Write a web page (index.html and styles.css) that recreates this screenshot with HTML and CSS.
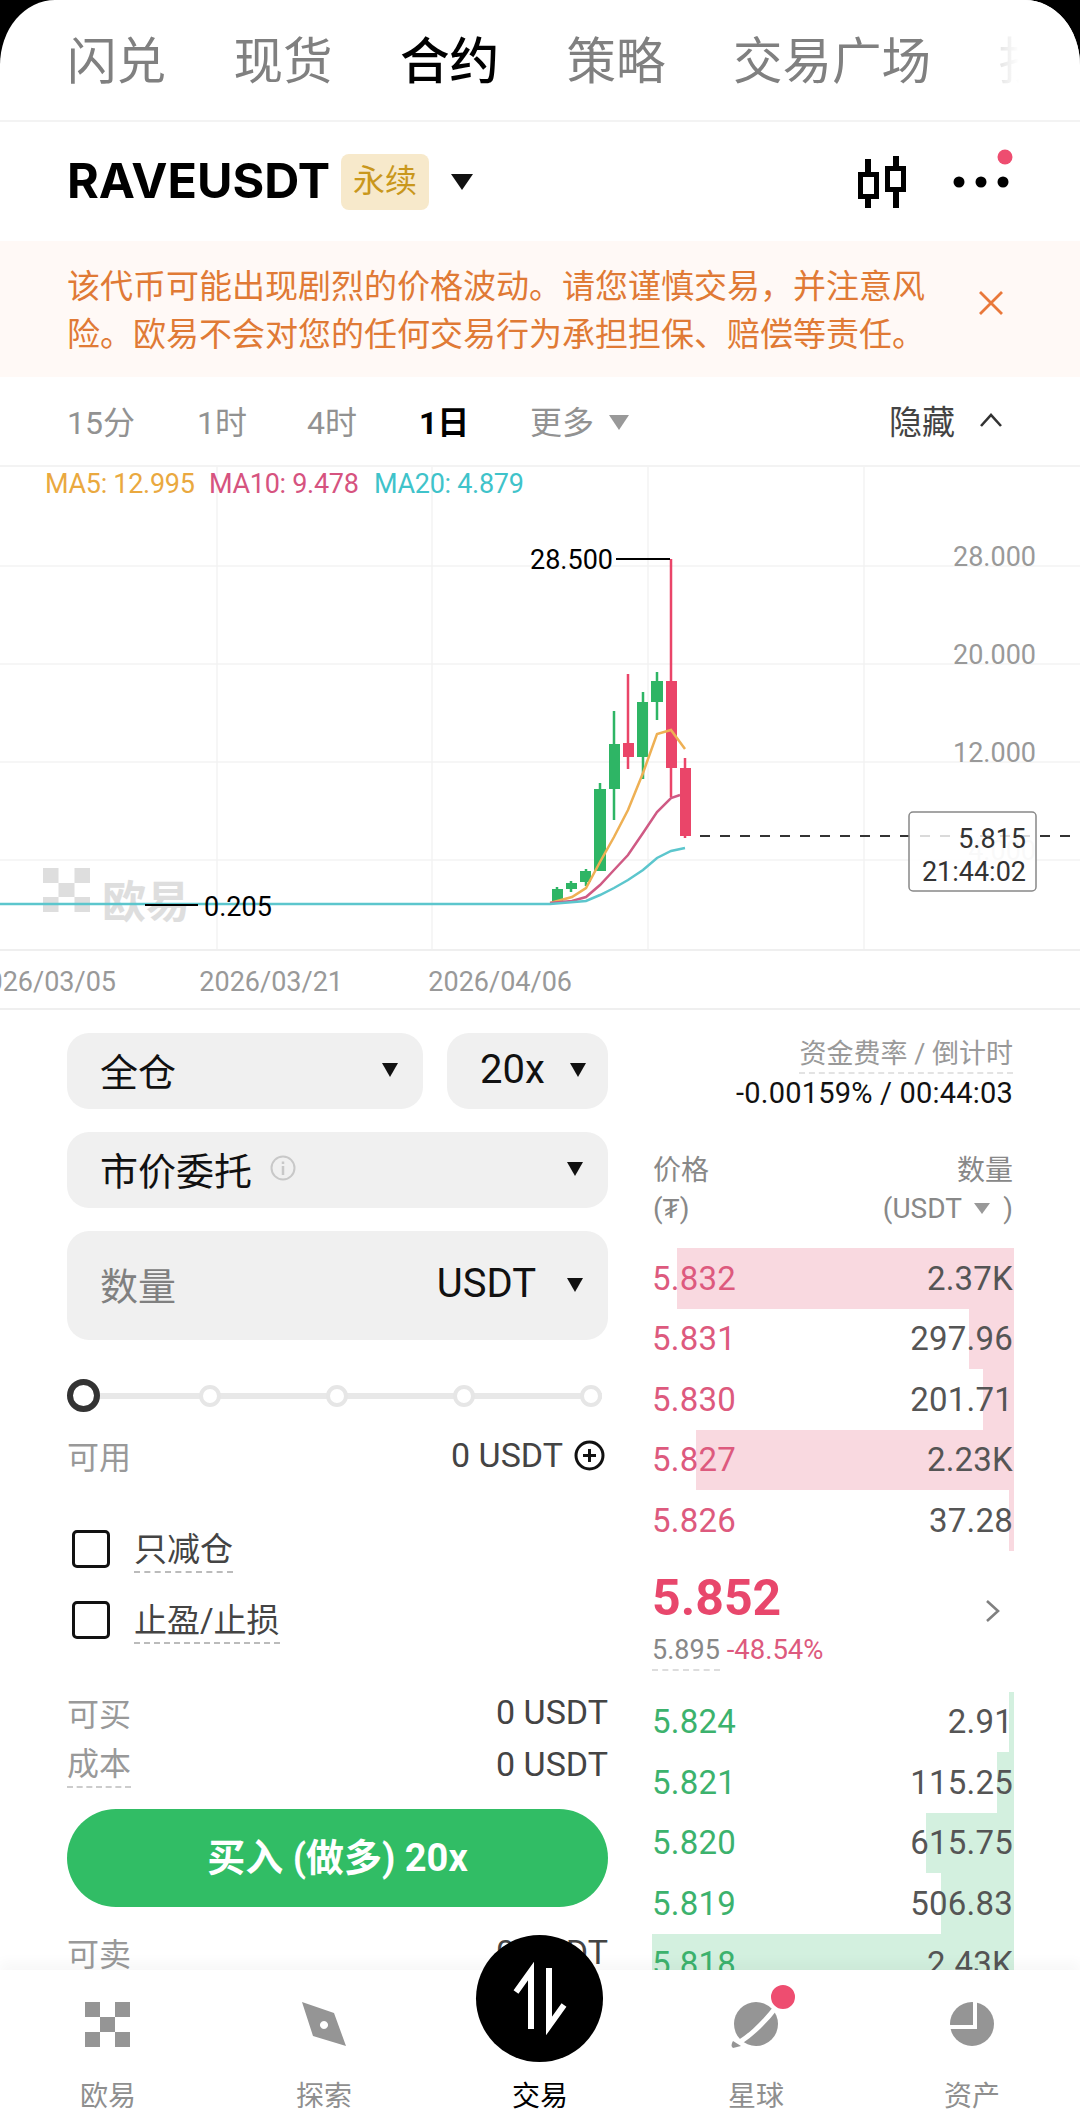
FILE: index.html
```html
<!DOCTYPE html>
<html lang="zh-CN">
  <head>
    <meta charset="UTF-8" />
    <meta name="viewport" content="width=device-width, initial-scale=1.0" />
    <title>RAVEUSDT 永续</title>
    <link rel="stylesheet" href="styles.css">
  </head>
  <body>
    <div class="app">
      <div class="tabs">
        <span class="tab">闪兑</span>
        <span class="tab">现货</span>
        <span class="tab tab-active">合约</span>
        <span class="tab">策略</span>
        <span class="tab">交易广场</span>
        <span class="tab">抄底</span>
      </div>

      <div class="symbol-bar">
        <span class="symbol">RAVEUSDT</span>
        <span class="badge">永续</span>
        <span class="tri tri-symbol"></span>
        <svg class="candle-icon" width="50" height="54" viewBox="857 152 50 54">
          <path d="M868 156V169M868 195V205M896 153V163M896 188V205" stroke="#000" stroke-width="6" fill="none" />
          <rect x="860.5" y="171.5" width="16" height="22" stroke="#000" stroke-width="5" fill="none" />
          <rect x="887.5" y="165.5" width="16" height="21" stroke="#000" stroke-width="5" fill="none" />
        </svg>
        <svg class="more-icon" width="64" height="44" viewBox="950 148 64 44">
          <circle cx="959" cy="182" r="5.5" fill="#000" />
          <circle cx="981" cy="182" r="5.5" fill="#000" />
          <circle cx="1003" cy="182" r="5.5" fill="#000" />
          <circle cx="1005" cy="157" r="7.5" fill="#ee4d70" />
        </svg>
      </div>

      <div class="notice">
        <p class="notice-text">该代币可能出现剧烈的价格波动。请您谨慎交易，并注意风险。欧易不会对您的任何交易行为承担担保、赔偿等责任。</p>
        <svg class="notice-close" width="26" height="26" viewBox="0 0 26 26">
          <path d="M2 2L24 24M24 2L2 24" stroke="#e9783a" stroke-width="2.8" fill="none" />
        </svg>
      </div>

      <div class="intervals">
        <span class="interval interval-15">15分</span>
        <span class="interval interval-1h">1时</span>
        <span class="interval interval-4h">4时</span>
        <span class="interval interval-active">1日</span>
        <span class="interval">更多</span>
        <span class="tri tri-more"></span>
        <span class="hide-chart">隐藏</span>
        <svg width="24" height="16" viewBox="0 0 24 16">
          <path d="M2 14L12 3L22 14" stroke="#333" stroke-width="2.6" fill="none" />
        </svg>
      </div>

      <svg class="chart" width="1080" height="543" viewBox="0 467 1080 543">
        <!-- grid -->
        <path class="grid" d="M217 467V950M432 467V950M648 467V950M864 467V950M0 566H1080M0 664H1080M0 762H1080M0 860H1080" />
        <path class="grid-strong" d="M0 950H1080M0 1009H1080" />

        <!-- watermark -->
        <g class="watermark">
          <rect x="43" y="868" width="15.5" height="15" />
          <rect x="74.500" y="868" width="15.500" height="15" />
          <rect x="58.500" y="883" width="16" height="14" />
          <rect x="43" y="897" width="15.500" height="15" />
          <rect x="74.500" y="897" width="15.500" height="15" />
          <text x="102" y="906">欧易</text>
        </g>

        <text class="ma ma5" x="45" y="493">MA5: 12.995</text>
        <text class="ma ma10" x="209" y="493">MA10: 9.478</text>
        <text class="ma ma20" x="374" y="493">MA20: 4.879</text>

        <text class="axis" x="1036" y="566">28.000</text>
        <text class="axis" x="1036" y="664">20.000</text>
        <text class="axis" x="1036" y="762">12.000</text>
        <text class="axis axis-faint" x="1036" y="860">4.000</text>

        <!-- green candles -->
        <g class="up">
          <path class="wick" d="M557 887V903M571 881V892M586 869V886M600 783V789M614 711V820M643 692V779M657 672V720" />
          <rect x="552" y="889" width="11" height="13" />
          <rect x="566" y="883" width="11" height="6" />
          <rect x="580" y="871" width="11" height="11" />
          <rect x="594" y="789" width="12" height="82" />
          <rect x="609" y="744" width="11" height="45" />
          <rect x="637" y="702" width="11" height="55" />
          <rect x="651" y="681" width="12" height="21" />
        </g>
        <!-- red candles -->
        <g class="down">
          <path class="wick" d="M628 674V769M671 559V797M685 758V838" />
          <rect x="623" y="743" width="11" height="14" />
          <rect x="666" y="681" width="11" height="87" />
          <rect x="680" y="768" width="11" height="68" />
        </g>

        <polyline class="line line-ma5" points="550,903 572,897 586,888 600,862 614,837 628,810 643,773 657,734 671,730 685,749" />
        <polyline class="line line-ma10" points="550,903 572,901 586,897 600,885 614,870 628,855 643,833 657,812 671,798 680,795" />
        <polyline class="line line-ma20" points="0,904 550,904 586,901 600,895 614,888 628,880 643,870 657,858 671,851 685,848" />

        <path class="mark-line" d="M616 559H670M145 905H198" />
        <text class="mark" x="530" y="569">28.500</text>
        <text class="mark" x="204" y="916">0.205</text>

        <path class="last-line" d="M700 836H1080" />
        <rect class="last-box" x="909" y="812" width="127" height="79" rx="4" />
        <text class="last-price" x="1026" y="848">5.815</text>
        <text class="last-price" x="1026" y="881">21:44:02</text>

        <text class="date" x="116" y="991">2026/03/05</text>
        <text class="date" x="343" y="991">2026/03/21</text>
        <text class="date" x="572" y="991">2026/04/06</text>
      </svg>

      <div class="trade">
        <div class="order-form">
          <div class="select-row">
            <div class="select select-margin">
              <span>全仓</span>
              <span class="tri"></span>
            </div>
            <div class="select select-lever">
              <span class="latin">20x</span>
              <span class="tri"></span>
            </div>
          </div>
          <div class="select">
            <span>市价委托</span>
            <svg class="info-icon" width="26" height="26" viewBox="0 0 26 26">
              <circle cx="13" cy="13" r="11.500" stroke="#c8c8c8" stroke-width="2" fill="none" />
              <path d="M13 11V20M13 6.500V9" stroke="#c8c8c8" stroke-width="2.500" fill="none" />
            </svg>
            <span class="tri tri-push"></span>
          </div>
          <div class="select select-amount">
            <span class="placeholder">数量</span>
            <span class="latin unit">USDT</span>
            <span class="tri"></span>
          </div>

          <div class="slider">
            <span class="slider-thumb"></span>
            <span class="slider-dot"></span>
            <span class="slider-dot"></span>
            <span class="slider-dot"></span>
            <span class="slider-dot"></span>
          </div>

          <div class="info-row info-available">
            <span class="info-label">可用</span>
            <span class="info-value">0 USDT</span>
            <svg class="plus-icon" width="31" height="31" viewBox="0 0 31 31">
              <circle cx="15.500" cy="15.500" r="13.500" stroke="#111" stroke-width="3" fill="none" />
              <path d="M15.500 9V22M9 15.500H22" stroke="#111" stroke-width="3" fill="none" />
            </svg>
          </div>

          <div class="check-row check-first">
            <span class="check"></span>
            <span class="check-label">只减仓</span>
          </div>
          <div class="check-row">
            <span class="check"></span>
            <span class="check-label">止盈/止损</span>
          </div>

          <div class="info-row info-buy">
            <span class="info-label">可买</span>
            <span class="info-value">0 USDT</span>
          </div>
          <div class="info-row info-cost">
            <span class="info-label info-dashed">成本</span>
            <span class="info-value">0 USDT</span>
          </div>

          <div class="buy-btn">买入 (做多) 20x</div>

          <div class="info-row info-sell">
            <span class="info-label">可卖</span>
            <span class="info-value">0 USDT</span>
          </div>
        </div>

        <div class="book">
          <div class="funding">
            <span class="funding-label">资金费率 / 倒计时</span>
            <span class="funding-value">-0.00159% / 00:44:03</span>
          </div>

          <div class="book-head">
            <div>
              <div>价格</div>
              <div>(₮)</div>
            </div>
            <div class="book-head-right">
              <div>数量</div>
              <div class="book-unit">(USDT <span class="tri tri-unit"></span> )</div>
            </div>
          </div>

          <div class="book-row ask">
            <span class="depth" style="width: 93.1%"></span>
            <span class="price">5.832</span><span class="qty">2.37K</span>
          </div>
          <div class="book-row ask">
            <span class="depth" style="width: 12.4%"></span>
            <span class="price">5.831</span><span class="qty">297.96</span>
          </div>
          <div class="book-row ask">
            <span class="depth" style="width: 8.6%"></span>
            <span class="price">5.830</span><span class="qty">201.71</span>
          </div>
          <div class="book-row ask">
            <span class="depth" style="width: 87.8%"></span>
            <span class="price">5.827</span><span class="qty">2.23K</span>
          </div>
          <div class="book-row ask">
            <span class="depth" style="width: 1.4%"></span>
            <span class="price">5.826</span><span class="qty">37.28</span>
          </div>

          <div class="mid">
            <div class="mid-top">
              <span class="mid-price">5.852</span>
              <svg class="mid-chevron" width="15" height="24" viewBox="0 0 15 24">
                <path d="M2 2L13 12L2 22" stroke="#808080" stroke-width="2.600" fill="none" />
              </svg>
            </div>
            <div class="mid-sub">
              <span class="mark-price">5.895</span>
              <span class="mid-change">-48.54%</span>
            </div>
          </div>

          <div class="book-row bid">
            <span class="depth" style="width: 1.4%"></span>
            <span class="price">5.824</span><span class="qty">2.91</span>
          </div>
          <div class="book-row bid">
            <span class="depth" style="width: 4.7%"></span>
            <span class="price">5.821</span><span class="qty">115.25</span>
          </div>
          <div class="book-row bid">
            <span class="depth" style="width: 24.3%"></span>
            <span class="price">5.820</span><span class="qty">615.75</span>
          </div>
          <div class="book-row bid">
            <span class="depth" style="width: 20.2%"></span>
            <span class="price">5.819</span><span class="qty">506.83</span>
          </div>
          <div class="book-row bid">
            <span class="depth" style="width: 100%"></span>
            <span class="price">5.818</span><span class="qty">2.43K</span>
          </div>
        </div>
      </div>

      <div class="nav">
        <div class="nav-item">
          <svg class="nav-icon" width="46" height="46" viewBox="0 0 46 46">
            <path class="nav-fill" d="M0 0H15V15H0ZM30 0H45V15H30ZM15 15H30V30H15ZM0 30H15V45H0ZM30 30H45V45H30Z" />
          </svg>
          <span>欧易</span>
        </div>
        <div class="nav-item">
          <svg class="nav-icon" width="46" height="46" viewBox="301 2002 46 46">
            <path class="nav-fill" fill-rule="evenodd" d="M302 2002L334 2013L346 2046L313 2036ZM324 2021a4 4 0 1 0 0.010 0Z" />
          </svg>
          <span>探索</span>
        </div>
        <div class="nav-item nav-active">
          <span>交易</span>
        </div>
        <div class="nav-item">
          <svg class="nav-icon" width="46" height="46" viewBox="733 2002 46 46">
            <circle class="nav-fill" cx="756" cy="2024" r="22" />
            <path d="M731 2046C745 2042 765 2022 777 2006" stroke="#fff" stroke-width="5" fill="none" />
            <path d="M733 2041Q730 2046 733 2048L741 2046Z" class="nav-fill" />
            <circle cx="783" cy="1997" r="13" fill="#ee4d70" stroke="#fff" stroke-width="2" />
          </svg>
          <span>星球</span>
        </div>
        <div class="nav-item">
          <svg class="nav-icon" width="46" height="46" viewBox="949 2002 46 46">
            <circle class="nav-fill" cx="972" cy="2024" r="22" />
            <path d="M975 2000V2027H948" stroke="#fff" stroke-width="4" fill="none" />
          </svg>
          <span>资产</span>
        </div>
        <div class="trade-btn">
          <svg width="127" height="127" viewBox="476 1935 127 127">
            <path d="M531 2029V1971L516 1992M549 1968V2026L564 2005" stroke="#fff" stroke-width="6" fill="none" />
          </svg>
        </div>
      </div>
    </div>
  </body>
</html>
```

FILE: styles.css
```css
* {
  box-sizing: border-box;
}

html,
body {
  margin: 0;
  background-color: #000; /* shows in the rounded corners */
}

body {
  font-family: Roboto, "Noto Sans CJK SC", sans-serif;
}

.app {
  position: relative;
  width: 1080px;
  height: 2128px;
  overflow: hidden;
  background-color: #fff;
  border-radius: 55px 55px 0 0 / 65px 65px 0 0;
}

/* Top tabs */
.tabs {
  position: relative;
  display: flex;
  gap: 67.5px;
  height: 122px;
  padding: 33px 0 0 67px;
  border-bottom: 2px solid #f3f3f3;
  white-space: nowrap;
  overflow: hidden;
}

.tabs::after {
  content: "";
  position: absolute;
  top: 0;
  right: 0;
  width: 80px;
  height: 110px;
  background: linear-gradient(to right, rgba(255, 255, 255, 0.8), #fff 24%);
}

.tab {
  font-size: 49.5px;
  line-height: 58px;
  color: #808080;
}

.tab-active {
  color: #000;
  font-weight: 500;
}

/* Triangles used by every dropdown */
.tri {
  display: inline-block;
  width: 0;
  height: 0;
  border-left: 8px solid transparent;
  border-right: 8px solid transparent;
  border-top: 14px solid #111;
}

/* Symbol bar */
.symbol-bar {
  display: flex;
  align-items: center;
  height: 119px;
  padding-left: 67px;
}

.symbol {
  font-family: Inter, Roboto, sans-serif;
  font-size: 48.5px;
  font-weight: 700;
  line-height: 56px;
  margin-top: -2px;
  color: #000;
}

.badge {
  width: 88px;
  height: 56px;
  margin-left: 11px;
  border-radius: 8px;
  background-color: #f7e9cb;
  color: #c9971c;
  font-size: 32px;
  line-height: 54px;
  text-align: center;
}

.tri-symbol {
  margin-left: 22px;
  border-left-width: 11px;
  border-right-width: 11px;
  border-top-width: 16px;
}

.candle-icon {
  margin-left: auto;
}

.more-icon {
  margin: 0 66px 0 43px;
  align-self: flex-start;
  margin-top: 26px;
}

/* Risk notice */
.notice {
  display: flex;
  align-items: center;
  height: 136px;
  padding: 4px 76px 0 67px;
  background-color: #fff9f6;
}

.notice-text {
  width: 860px;
  margin: 0;
  color: #e07a35;
  font-size: 33px;
  line-height: 48px;
}

.notice-close {
  margin-left: auto;
  margin-bottom: 16px;
}

/* Interval row */
.intervals {
  display: flex;
  align-items: center;
  height: 90px;
  padding: 0 77px 2px 67px;
  color: #929292;
  font-size: 32px;
  border-bottom: 2px solid #f3f3f3;
}

.interval-15 {
  width: 130px;
}

.interval-1h {
  width: 110px;
}

.interval-4h {
  width: 112px;
}

.interval-active {
  width: 111px;
  color: #000;
  font-weight: 700;
}

.tri-more {
  margin-left: 15px;
  margin-top: 4px;
  border-left-width: 10px;
  border-right-width: 10px;
  border-top: 15px solid #999;
}

.hide-chart {
  margin-left: auto;
  margin-right: 24px;
  font-size: 33px;
  color: #444;
}

/* Chart */
.chart {
  display: block;
}

.grid {
  stroke: #f3f3f3;
  stroke-width: 1.5;
  fill: none;
}

.grid-strong {
  stroke: #efefef;
  stroke-width: 2;
  fill: none;
}

.watermark {
  fill: #dedede;
}

.watermark text {
  font-size: 44px;
  font-weight: 700;
  dominant-baseline: middle;
}

.ma {
  font-size: 27px;
  letter-spacing: -0.3px;
}

.ma5 {
  fill: #eaa93f;
}

.ma10 {
  fill: #d6537f;
}

.ma20 {
  fill: #3fc3ca;
}

.axis {
  font-size: 27px;
  fill: #999;
  text-anchor: end;
}

.axis-faint {
  fill: #ddd;
}

.up {
  fill: #2eb565;
  stroke: none;
}

.down {
  fill: #ea4569;
  stroke: none;
}

.up .wick {
  stroke: #2eb565;
  stroke-width: 2.5;
  fill: none;
}

.down .wick {
  stroke: #ea4569;
  stroke-width: 2.5;
  fill: none;
}

.line {
  fill: none;
  stroke-width: 2.5;
}

.line-ma5 {
  stroke: #eeb054;
}

.line-ma10 {
  stroke: #cf5a84;
}

.line-ma20 {
  stroke: #5cc6cd;
}

.mark-line {
  stroke: #000;
  stroke-width: 2;
  fill: none;
}

.mark {
  font-size: 27px;
  fill: #000;
}

.last-line {
  stroke: #333;
  stroke-width: 2;
  stroke-dasharray: 10 10;
  fill: none;
}

.last-box {
  fill: rgba(255, 255, 255, 0.82);
  stroke: #888;
  stroke-width: 1.5;
}

.last-price {
  font-size: 27px;
  fill: #333;
  text-anchor: end;
}

.date {
  font-size: 27px;
  fill: #999;
  text-anchor: end;
}

/* Order form + book */
.trade {
  display: flex;
  gap: 44px;
  padding-left: 67px;
}

.order-form {
  width: 541px;
  padding-top: 23px;
}

.select-row {
  display: flex;
  gap: 24px;
}

.select {
  display: flex;
  align-items: center;
  height: 76px;
  margin-bottom: 23px;
  padding: 0 25px 4px 33px;
  border-radius: 22px;
  background-color: #f0f0f0;
  color: #111;
  font-size: 38px;
}

.select .tri {
  margin-left: auto;
  margin-top: 2px;
}

.select-margin {
  flex: 1;
}

.select-lever {
  width: 161px;
  padding: 0 22px 4px 33px;
}

.latin {
  font-size: 40px;
}

.select-amount {
  justify-content: flex-start;
  height: 109px;
  margin-bottom: 0;
}

.placeholder {
  color: #808080;
}

.select-amount .unit {
  margin-left: auto;
  margin-right: 31px;
}

.select-amount .tri {
  margin-left: 0;
}

.info-icon {
  margin-left: 18px;
}

.slider {
  position: relative;
  display: flex;
  align-items: center;
  justify-content: space-between;
  width: 529.500px;
  height: 33px;
  margin: 39px 0 0 5.500px;
}

.slider::before {
  content: "";
  position: absolute;
  top: 14px;
  left: -5.500px;
  right: 0;
  height: 6px;
  background-color: #e8e8e8;
}

.slider-thumb,
.slider-dot {
  position: relative;
  border-radius: 50%;
  background-color: #fff;
}

.slider-thumb {
  width: 33px;
  height: 33px;
  margin: 0 -5.500px;
  border: 6px solid #333;
}

.slider-dot {
  width: 22px;
  height: 22px;
  border: 4px solid #e6e6e6;
}

.info-row {
  display: flex;
  align-items: center;
  height: 44px;
  font-size: 32px;
}

.info-label {
  color: #999;
}

.info-value {
  margin-left: auto;
  color: #444;
  font-size: 34px;
}

.info-available {
  margin-top: 21px;
}

.plus-icon {
  margin: 0 3px 0 11px;
}

.check-row {
  display: flex;
  align-items: flex-start;
  height: 38px;
  margin-top: 33px;
  padding-left: 5px;
}

.check-first {
  margin-top: 53px;
}

.check {
  width: 38px;
  height: 38px;
  border: 3.5px solid #111;
  border-radius: 5px;
}

.check-label {
  margin-left: 24px;
  padding-bottom: 2px;
  border-bottom: 2px dashed #bbb;
  color: #444;
  font-size: 33px;
  line-height: 39px;
}

.info-buy {
  margin-top: 51px;
}

.info-cost {
  margin-top: 8px;
}

.info-dashed {
  border-bottom: 2px dashed #ccc;
  line-height: 44px;
  height: 46px;
  margin-top: 2px;
}

.buy-btn {
  height: 98px;
  margin-top: 23px;
  border-radius: 50px;
  background-color: #31bd65;
  color: #fff;
  font-size: 38px;
  font-weight: 700;
  line-height: 98px;
  text-align: center;
}

.info-sell {
  margin-top: 23px;
}

.book {
  width: 362px;
  padding-top: 26px;
}

.funding {
  display: flex;
  flex-direction: column;
  align-items: flex-end;
  padding-right: 1px;
  font-size: 28px;
  line-height: 36px;
}

.funding-label {
  color: #999;
  font-size: 27px;
  border-bottom: 2px dashed #e3e3e3;
}

.funding-value {
  margin-top: 1px;
  color: #111;
  font-size: 29px;
  letter-spacing: 0.2px;
}

.book-head {
  display: flex;
  justify-content: space-between;
  margin-top: 41px;
  padding: 0 1px;
  color: #888;
  font-size: 28px;
  line-height: 38px;
}

.book-head-right {
  text-align: right;
}

.tri-unit {
  margin: 0 6px 4px;
  border-top: 11px solid #999;
}

.book-row {
  position: relative;
  display: flex;
  justify-content: space-between;
  align-items: center;
  height: 60.5px;
  padding: 0 1px 0 0;
  font-size: 33px;
  letter-spacing: 0.2px;
}

.book-head + .book-row {
  margin-top: 20px;
}

.depth {
  position: absolute;
  top: 0;
  right: 0;
  bottom: 0;
}

.price,
.qty {
  position: relative;
}

.qty {
  color: #555;
}

.ask .depth {
  background-color: #f9d9e0;
}

.ask .price {
  color: #dd5a7e;
}

.bid .depth {
  background-color: #d3f0df;
}

.bid .price {
  color: #3cb26d;
}

.mid {
  height: 141px;
  padding: 22px 1px 0 0;
}

.mid-top {
  display: flex;
  justify-content: space-between;
  align-items: flex-end;
  height: 50px;
  padding-right: 13px;
}

.mid-price {
  color: #e8476c;
  font-size: 50px;
  font-weight: 700;
  line-height: 50px;
}

.mid-sub {
  margin-top: 10px;
  font-size: 27.5px;
  line-height: 34px;
}

.mark-price {
  display: inline-block;
  padding-bottom: 2px;
  border-bottom: 2px dashed #ddd;
  color: #888;
  font-size: 27px;
}

.mid-change {
  color: #dd5a7e;
}

/* Bottom nav */
.nav {
  position: absolute;
  left: 0;
  right: 0;
  bottom: 0;
  display: grid;
  grid-template-columns: repeat(5, 1fr);
  height: 158px;
  background-color: #fff;
  box-shadow: 0 -8px 12px rgba(0, 0, 0, 0.03);
}

.nav-item {
  display: flex;
  flex-direction: column;
  align-items: center;
  justify-content: flex-end;
  padding-bottom: 11px;
  color: #8f8f8f;
  font-size: 28px;
  line-height: 40px;
}

.nav-active {
  color: #000;
}

.nav-icon {
  margin-bottom: 29px;
  overflow: visible;
}

.nav-fill {
  fill: #959595;
}

.trade-btn {
  position: absolute;
  top: -35px;
  left: 476px;
  width: 127px;
  height: 127px;
  border-radius: 50%;
  background-color: #000;
}
```
